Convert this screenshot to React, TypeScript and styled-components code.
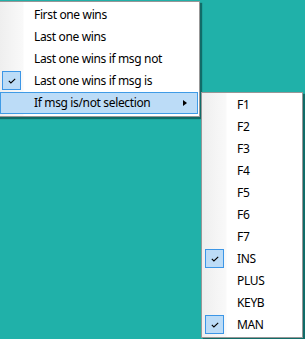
import styled, { createGlobalStyle } from 'styled-components';

const GlobalStyle = createGlobalStyle`
  html, body {
    margin: 0;
    padding: 0;
    background: #20b1a9;
    overflow: hidden;
  }
  body {
    font-family: "Noto Sans", "Liberation Sans", sans-serif;
    font-size: 12px;
    letter-spacing: -0.35px;
    color: #000;
  }
`;

const Desktop = styled.div`
  position: relative;
  width: 305px;
  height: 339px;
`;

const Menu = styled.div<{ $left: number; $top: number; $width: number; $padY: number }>`
  position: absolute;
  left: ${(p) => p.$left}px;
  top: ${(p) => p.$top}px;
  width: ${(p) => p.$width}px;
  box-sizing: border-box;
  padding: ${(p) => p.$padY}px 1px;
  border: 1px solid #979797;
  background: linear-gradient(to right, #eeeeee 0, #f9f9f9 24px, #ffffff 25px);
  box-shadow: 2px 2px 1px rgba(0, 40, 40, 0.5);
  display: flex;
  flex-direction: column;
`;

const Item = styled.div<{ $active?: boolean }>`
  position: relative;
  height: 22px;
  box-sizing: border-box;
  display: flex;
  align-items: center;
  padding-left: 33px;
  padding-right: 10px;
  white-space: nowrap;
  border: 1px solid ${(p) => (p.$active ? '#3f9be6' : 'transparent')};
  background: ${(p) => (p.$active ? '#bcdcf7' : 'transparent')};
`;

const Label = styled.span`
  flex: 1;
  line-height: 20px;
`;

const Check = styled.span`
  position: absolute;
  left: 1px;
  top: 0px;
  width: 19px;
  height: 19px;
  box-sizing: border-box;
  border: 1px solid #3c96e6;
  background: #bcdcf7;
  display: flex;
  align-items: center;
  justify-content: center;
`;

const Arrow = styled.span`
  width: 0;
  height: 0;
  border-top: 3.5px solid transparent;
  border-bottom: 3.5px solid transparent;
  border-left: 4px solid #000;
`;

const CheckMark = () => (
  <svg width="8" height="6" viewBox="0 0 8 6">
    <path d="M0.8 2.8 L2.9 4.9 L7.2 0.8" fill="none" stroke="#000" strokeWidth="1.1" />
  </svg>
);

const mainItems = [
  { label: 'First one wins' },
  { label: 'Last one wins' },
  { label: 'Last one wins if msg not' },
  { label: 'Last one wins if msg is', checked: true },
  { label: 'If msg is/not selection', active: true, sub: true },
];

const subItems = [
  { label: 'F1' },
  { label: 'F2' },
  { label: 'F3' },
  { label: 'F4' },
  { label: 'F5' },
  { label: 'F6' },
  { label: 'F7' },
  { label: 'INS', checked: true },
  { label: 'PLUS' },
  { label: 'KEYB' },
  { label: 'MAN', checked: true },
];

export default function App() {
  return (
    <Desktop>
      <GlobalStyle />
      <Menu $left={-2} $top={1} $width={202} $padY={2}>
        {mainItems.map((it) => (
          <Item key={it.label} $active={it.active}>
            {it.checked && (
              <Check>
                <CheckMark />
              </Check>
            )}
            <Label>{it.label}</Label>
            {it.sub && <Arrow />}
          </Item>
        ))}
      </Menu>
      <Menu $left={201} $top={92} $width={102} $padY={1}>
        {subItems.map((it) => (
          <Item key={it.label}>
            {it.checked && (
              <Check>
                <CheckMark />
              </Check>
            )}
            <Label>{it.label}</Label>
          </Item>
        ))}
      </Menu>
    </Desktop>
  );
}
